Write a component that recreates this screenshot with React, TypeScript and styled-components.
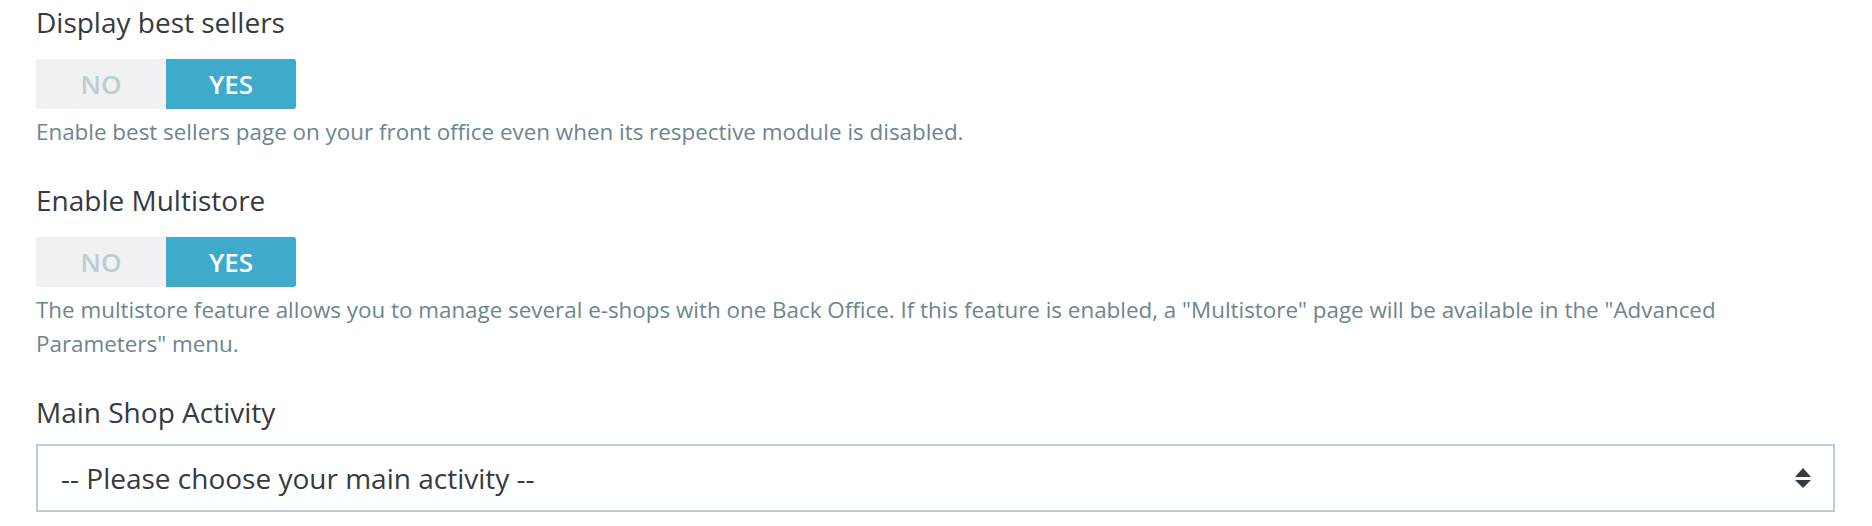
import styled, { createGlobalStyle } from 'styled-components';

// 설정 항목 (label / toggle / help)
const switchFields = [
	{
		label: 'Display best sellers',
		value: true,
		help: 'Enable best sellers page on your front office even when its respective module is disabled.',
	},
	{
		label: 'Enable Multistore',
		value: true,
		help: 'The multistore feature allows you to manage several e-shops with one Back Office. If this feature is enabled, a "Multistore" page will be available in the "Advanced Parameters" menu.',
	},
];

const SelectArrows = () => (
	<svg width='16' height='20' viewBox='0 0 16 20'>
		<path d='M0 9 L8 0 L16 9 Z' fill='#363a41' />
		<path d='M0 12 L16 12 L8 20 Z' fill='#363a41' />
	</svg>
);

const App = () => {
	return (
		<>
			<GlobalStyle />
			<Form>
				{switchFields.map((field) => (
					<FormGroup key={field.label}>
						<Label>{field.label}</Label>
						<Switch>
							<SwitchOption active={!field.value}>NO</SwitchOption>
							<SwitchOption active={field.value}>YES</SwitchOption>
						</Switch>
						<HelpText>{field.help}</HelpText>
					</FormGroup>
				))}
				<FormGroup>
					<Label>Main Shop Activity</Label>
					<Select>
						<span>-- Please choose your main activity --</span>
						<SelectArrows />
					</Select>
				</FormGroup>
			</Form>
		</>
	);
};

export default App;

const GlobalStyle = createGlobalStyle`
	body {
		margin: 0;
		background: #fff;
		font-family: 'Open Sans', 'Noto Sans', sans-serif;
	}
`;
const Form = styled.div`
	display: flex;
	flex-direction: column;
	gap: 31px;
	padding: 2px 37px 0 36px;
`;
const FormGroup = styled.div`
	display: flex;
	flex-direction: column;
	align-items: flex-start;
`;
const Label = styled.div`
	font-size: 28px;
	line-height: 40px;
	color: #363a41;
	margin-bottom: 12px;
`;
const Switch = styled.div`
	display: flex;
	width: 260px;
	height: 50px;
	margin-top: 5px;
	border-radius: 3px;
	overflow: hidden;
	background-color: #eff1f2;
`;
const SwitchOption = styled.span<{ active: boolean }>`
	flex: 1;
	display: flex;
	align-items: center;
	justify-content: center;
	font-size: 26px;
	font-weight: 600;
	background-color: ${(props) => (props.active ? '#3eaacc' : '#eff1f2')};
	color: ${(props) => (props.active ? '#fff' : '#bbcdd2')};
`;
const HelpText = styled.p`
	margin: 6px 0 0;
	max-width: 1740px;
	font-size: 22.4px;
	line-height: 34px;
	color: #6c868e;
`;
const Select = styled.div`
	box-sizing: border-box;
	display: flex;
	align-items: center;
	justify-content: space-between;
	width: 100%;
	height: 68px;
	padding: 0 22px 0 23px;
	border: 2px solid #bbcdd2;
	font-size: 28px;
	line-height: 40px;
	color: #363a41;
`;
